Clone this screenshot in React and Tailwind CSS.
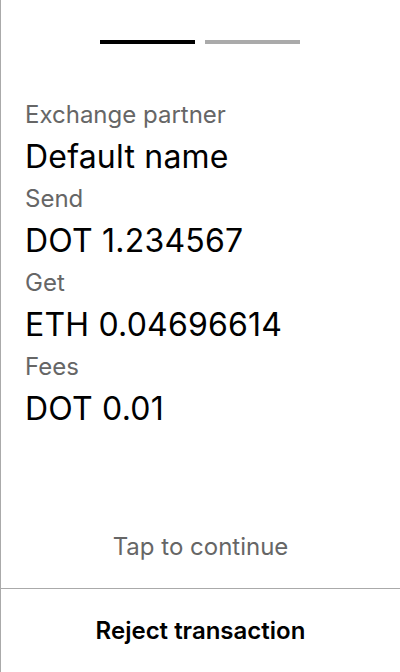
import React from "react";

const rows = [
  { label: "Exchange partner", value: "Default name" },
  { label: "Send", value: "DOT 1.234567" },
  { label: "Get", value: "ETH 0.04696614" },
  { label: "Fees", value: "DOT 0.01" },
];

const App = () => {
  return (
    <div
      className="w-[400px] h-[672px] flex flex-col bg-white border-l border-[#aaaaaa]"
      style={{ fontFamily: "Inter, 'Noto Sans', sans-serif" }}
    >
      <div className="flex justify-center gap-[10px] pt-[40px] pr-[1px]">
        <div className="w-[95px] h-[4px] bg-black" />
        <div className="w-[95px] h-[4px] bg-[#aaaaaa]" />
      </div>

      <div className="flex flex-col px-[24px] pt-[57px]">
        {rows.map((row) => (
          <div key={row.label} className="flex flex-col">
            <span className="text-[24px] leading-[28px] text-[#666666]">
              {row.label}
            </span>
            <span className="text-[32px] leading-[56px] text-black tracking-[0.2px]">
              {row.value}
            </span>
          </div>
        ))}
      </div>

      <div className="flex-1" />

      <button className="text-[24px] leading-[28px] text-[#666666] pb-[27px]">
        Tap to continue
      </button>

      <div className="h-[84px] border-t border-[#aaaaaa] flex items-center justify-center">
        <button className="text-[24px] font-semibold text-black">
          Reject transaction
        </button>
      </div>
    </div>
  );
};

export default App;
